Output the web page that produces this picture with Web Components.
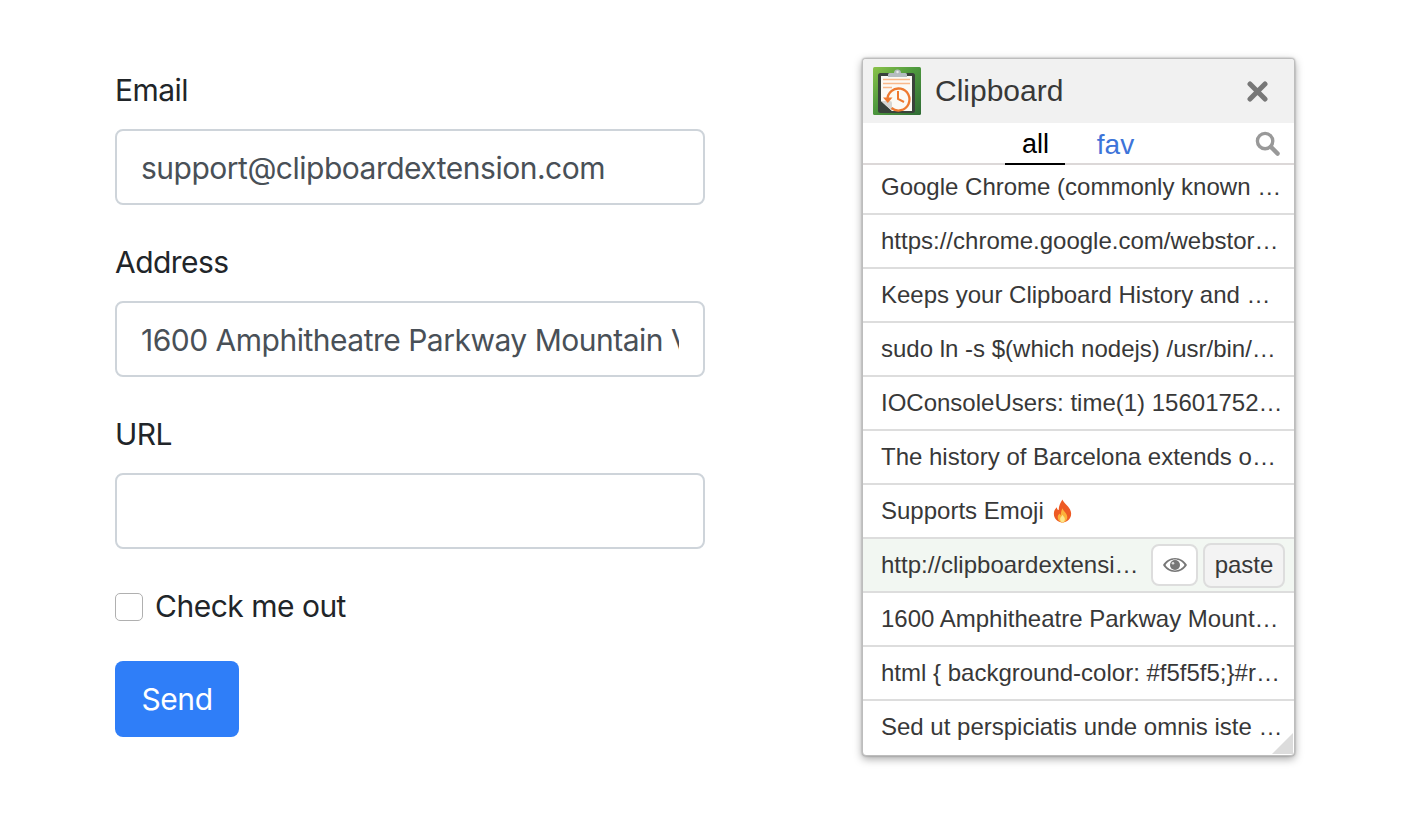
<!DOCTYPE html>
<html lang="en"><head><meta charset="utf-8"><title>Clipboard</title>
<style>html,body{margin:0;background:#fff}</style></head>
<body>
<demo-page>
  <demo-form>
    <form-field label="Email" value="support@clipboardextension.com"></form-field>
    <form-field label="Address" value="1600 Amphitheatre Parkway Mountain View, CA 94043"></form-field>
    <form-field label="URL" value=""></form-field>
    <form-check label="Check me out"></form-check>
    <send-button>Send</send-button>
  </demo-form>
  <clip-popup>
    <clip-row>Google Chrome (commonly known …</clip-row>
    <clip-row>https://chrome.google.com/webstor…</clip-row>
    <clip-row>Keeps your Clipboard History and …</clip-row>
    <clip-row>sudo ln -s $(which nodejs) /usr/bin/…</clip-row>
    <clip-row>IOConsoleUsers: time(1) 15601752…</clip-row>
    <clip-row>The history of Barcelona extends o…</clip-row>
    <clip-row>Supports Emoji <fire-icon></fire-icon></clip-row>
    <clip-row active>http://clipboardextensi…</clip-row>
    <clip-row>1600 Amphitheatre Parkway Mount…</clip-row>
    <clip-row>html { background-color: #f5f5f5;}#r…</clip-row>
    <clip-row last>Sed ut perspiciatis unde omnis iste …</clip-row>
  </clip-popup>
</demo-page>
<script>
function def(name, css, html){
  customElements.define(name, class extends HTMLElement{
    connectedCallback(){
      if(this.shadowRoot) return;
      const r=this.attachShadow({mode:'open'});
      const a=n=>this.getAttribute(n)||'';
      r.innerHTML='<style>'+css+'</style>'+(typeof html==='function'?html(a,this):html);
    }
  });
}
const FORM='Inter,"Liberation Sans",sans-serif';
def('demo-page',`:host{display:flex;align-items:flex-start;box-sizing:border-box;width:1404px;height:823px;padding:58px 0 0 115px;overflow:hidden}`,'<slot></slot>');
def('demo-form',`:host{display:flex;flex-direction:column;width:590px;margin:7px 157px 0 0;font-family:${FORM};color:#212529}`,'<slot></slot>');
def('form-field',`:host{display:block;margin-bottom:32px}
 label{display:block;height:48px;font-size:30px;line-height:50px;margin-bottom:16px;letter-spacing:-.55px}
 .box{box-sizing:border-box;height:76px;border:2px solid #ced4da;border-radius:8px;padding:0 24px;display:flex;align-items:center;background:#fff}
 .v{flex:1;overflow:hidden;white-space:nowrap;font-size:30px;line-height:48px;padding-top:2px;color:#495057;letter-spacing:-.5px}`,
 a=>`<label>${a('label')}</label><div class="box"><div class="v">${a('value')}</div></div>`);
def('form-check',`:host{display:flex;align-items:center;height:48px;margin-bottom:32px;gap:12px}
 i{display:block;box-sizing:border-box;width:28px;height:28px;border:1px solid #b0b0b0;border-radius:5px;background:#fff;margin-top:4px}
 span{font-size:30px;line-height:48px;padding-top:2px;letter-spacing:-.5px}`,
 a=>`<i></i><span>${a('label')}</span>`);
def('send-button',`:host{display:flex;align-items:center;justify-content:center;align-self:flex-start;box-sizing:border-box;width:124px;height:76px;border-radius:8px;background:#2f7ef8;color:#fff;font-size:30px;letter-spacing:-.4px}`,'<slot></slot>');
def('app-logo',`:host{display:block;width:48px;height:48px;flex:none}svg{display:block}`,`
<svg width="48" height="48" viewBox="0 0 48 48"><defs><linearGradient id="g" x1="0" y1="0" x2="1" y2="1"><stop offset="0" stop-color="#8bc34a"/><stop offset=".45" stop-color="#4f9a3e"/><stop offset="1" stop-color="#2f6b35"/></linearGradient></defs>
<rect width="48" height="48" rx="1.5" fill="url(#g)"/>
<rect x="5" y="6" width="37" height="40" rx="2.500" fill="#39423b"/>
<path d="M8 9h31v35H19L8 34z" fill="#fbfaf5"/>
<path d="M8 34l11 10v-8a2 2 0 0 0-2-2z" fill="#d6d6d2"/>
<path d="M15 10V7.500a1.500 1.500 0 0 1 1.500-1.500H21a3.500 3.500 0 0 1 7 0h4.500A1.500 1.500 0 0 1 34 7.500V10z" fill="#b4bcc0"/><circle cx="24.500" cy="5" r="1.200" fill="#e8ecec"/>
<path d="M10 12.500h27M10 16.500h27" stroke="#f9b98a" stroke-width="1.300" fill="none"/><path d="M10 20.500h9" stroke="#f9b98a" stroke-width="1.300"/>
<path d="M14.500 33a11 11 0 1 1 4 8" fill="none" stroke="#ee7a30" stroke-width="2.300"/>
<path d="M10 30.500h9.500l-4.700 5.500z" fill="#ee7a30"/>
<path d="M25 24v8l6 3" fill="none" stroke="#ee7a30" stroke-width="2"/></svg>`);
def('fire-icon',`:host{display:inline-block;width:21px;height:24px;margin-left:2px;vertical-align:-4px}svg{display:block}`,`
<svg width="21" height="24" viewBox="0 0 22 24" role="img" aria-label="🔥"><path d="M11 0c1 4 8 7 9 14 .5 6-4 10-9 10S1.500 20 2 14c.3-3 2-5 3-6 .2 2 1 3 2 3 0-4 2-8 4-11z" fill="#ee5a24"/><path d="M11 9c.5 3 5 5 5 9.500 0 3-2.500 5.500-5 5.500s-5-2.500-5-5.500c0-2 1-3 2-4 .3 1 .8 1.500 1.300 1.500C9.300 13 10 11 11 9z" fill="#fbb03b"/><path d="M11 16c.5 1.500 2.500 2.500 2.500 4.500 0 2-1.200 3.500-2.500 3.500s-2.500-1.500-2.500-3.500c0-2 2-3 2.500-4.500z" fill="#fde58a"/></svg>`);
def('clip-row',`:host{display:flex;align-items:center;box-sizing:border-box;height:54px;flex:none;border-bottom:2px solid #ddd;padding:0 9px 0 18px;font-size:24px;color:#383838;gap:8px}
 :host([active]){background:#f2f7f2}
 :host([last]){border-bottom-color:transparent}
 .t{flex:1;min-width:0;white-space:nowrap;line-height:30px;padding-bottom:1px}
 .btns{display:flex;align-items:center;gap:5px;flex:none}
 .b{box-sizing:border-box;border:2px solid #ddd;border-radius:8px;display:flex;align-items:center;justify-content:center}
 .eye{width:47px;height:42px;background:#fff}
 .paste{width:82px;height:45px;background:#f3f3f3;color:#383838;font-size:24px}`,
 (a,el)=>`<div class="t"><slot></slot></div>`+(el.hasAttribute('active')?`<div class="btns"><div class="b eye"><svg width="24" height="14" viewBox="0 0 24 14"><path fill-rule="evenodd" fill="#777" d="M12 0C6.500 0 2.500 3 0 7c2.500 4 6.500 7 12 7s9.500-3 12-7c-2.500-4-6.500-7-12-7zm0 1.600c3.800 0 7.500 2.200 9.500 5.400-2 3.200-5.700 5.400-9.500 5.400S4.500 10.200 2.500 7c2-3.200 5.700-5.400 9.500-5.400z"/><circle cx="12" cy="7" r="5" fill="#777"/><circle cx="10" cy="5.200" r="1.300" fill="#ddd"/></svg></div><div class="b paste">paste</div></div>`:''));
def('clip-popup',`:host{display:flex;flex-direction:column;position:relative;box-sizing:border-box;width:433px;height:698px;border:1px solid #bdbdbd;border-radius:4px;box-shadow:0 0 2px rgba(0,0,0,.35),0 3px 8px rgba(0,0,0,.35);background:#fff;font-family:"Liberation Sans",Arial,sans-serif;overflow:hidden}
 header{display:flex;align-items:center;height:64px;flex:none;background:#f1f1f1;padding:0 0 0 10px;color:#383838}
 h1{flex:1;margin:0 0 0 14px;font-size:30px;font-weight:400}
 .x{margin-right:26px;display:block}
 nav{display:flex;position:relative;justify-content:center;height:42px;flex:none;box-sizing:border-box;border-bottom:2px solid #dcd8d8;gap:20px;padding-right:7px}
 nav span{width:60px;height:42px;box-sizing:border-box;text-align:center;font-size:27px;line-height:41px;padding-top:1px;color:#3d74d9}
 nav .fav{font-size:28px;padding-left:1px}
 nav .on{color:#000;border-bottom:2px solid #000;padding-left:1px}
 .s{position:absolute;right:14px;top:8px}
 .list{flex:1;min-height:0;overflow:hidden;margin-top:-4px}
 .corner{position:absolute;right:1px;bottom:1px;width:0;height:0;border-style:solid;border-width:0 0 21px 21px;border-color:transparent transparent #dcdcdc transparent}`,
 `<header><app-logo></app-logo><h1>Clipboard</h1><svg class="x" width="21" height="21" viewBox="0 0 21 21"><path d="M3 3l15 15M18 3L3 18" stroke="#777" stroke-width="5" stroke-linecap="round"/></svg></header>
 <nav><span class="on">all</span><span class="fav">fav</span><svg class="s" width="25" height="25" viewBox="0 0 26 26"><circle cx="10.500" cy="10.500" r="8" fill="none" stroke="#999" stroke-width="3.500"/><path d="M16.500 16.500l7 7" stroke="#999" stroke-width="4.500" stroke-linecap="round"/></svg></nav>
 <div class="list"><slot></slot></div><div class="corner"></div>`);
</script>
</body></html>
